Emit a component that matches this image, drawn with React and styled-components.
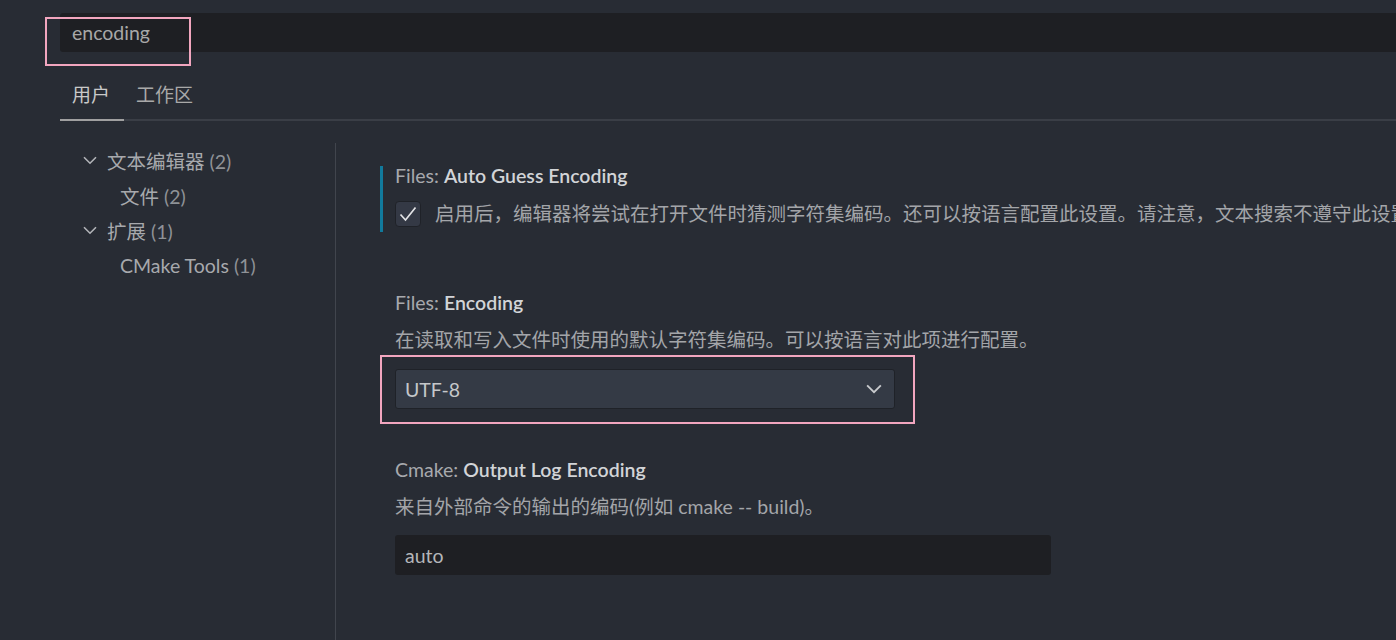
import React from "react";
import styled, { createGlobalStyle } from "styled-components";

const GlobalStyle = createGlobalStyle`
  html, body {
    margin: 0;
    padding: 0;
    background: #282c34;
    overflow: hidden;
  }
  body {
    font-family: "Lato", "Noto Sans CJK SC", sans-serif;
    color: #a9acb2;
  }
`;

const Page = styled.div`
  width: 1396px;
  height: 640px;
  padding: 13px 0 0 60px;
  box-sizing: border-box;
  display: flex;
  flex-direction: column;
  overflow: hidden;
`;

const SearchWrap = styled.div`
  position: relative;
`;

const SearchBox = styled.div`
  height: 39px;
  background: #1e1f23;
  border-radius: 3px 0 0 3px;
  display: flex;
  align-items: center;
  padding-left: 12px;
  font-size: 19.5px;
  color: #a8a8a8;
`;

// pink annotation frames drawn over the ui
const Highlight = styled.div`
  position: absolute;
  border: 2px solid #f2a6bf;
  pointer-events: none;
  box-sizing: border-box;
`;

const TabBar = styled.div`
  display: flex;
  height: 67px;
  align-items: flex-end;
  border-bottom: 2px solid #3a3e46;
`;

const Tab = styled.div`
  font-size: 19px;
  color: ${(p) => (p.$active ? "#c9c9c9" : "#a9a9a9")};
  padding: 0 ${(p) => (p.$active ? "14px" : "9px")} 12px 12px;
  margin-bottom: -2px;
  border-bottom: 2px solid ${(p) => (p.$active ? "#a0a0a0" : "transparent")};
  line-height: 24px;
`;

const Body = styled.div`
  flex: 1;
  display: flex;
`;

const Sidebar = styled.div`
  width: 275px;
  margin-top: 22px;
  border-right: 1px solid #41454d;
  display: flex;
  flex-direction: column;
`;

const TreeRow = styled.div`
  height: 35px;
  display: flex;
  align-items: center;
  padding-left: ${(p) => (p.$child ? "60px" : "23px")};
  font-size: 19.5px;
  color: #a7a9ad;
  gap: 10px;
  white-space: nowrap;
`;

const Count = styled.span`
  color: #8f9297;
  margin-left: 5px;
`;

const Content = styled.div`
  flex: 1;
  padding: 45px 0 0 44px;
  display: flex;
  flex-direction: column;
  min-width: 0;
  overflow: hidden;
`;

const Setting = styled.div`
  position: relative;
  margin-top: ${(p) => p.$top || 0}px;
  padding: 0 0 ${(p) => (p.$focused ? "5px" : "0")} 12px;
  border-left: 3px solid ${(p) => (p.$focused ? "#117a9c" : "transparent")};
  display: flex;
  flex-direction: column;
`;

const Title = styled.div`
  font-size: 19.5px;
  line-height: 20px;
  color: #a7a9ad;
  white-space: nowrap;
  b {
    font-weight: 600;
    color: #d2d4d7;
  }
`;

const Desc = styled.div`
  font-size: 19.5px;
  line-height: 20px;
  margin-top: 17px;
  color: #a3a5a9;
  white-space: nowrap;
`;

const CheckRow = styled.div`
  display: flex;
  align-items: center;
  height: 26px;
  line-height: 20px;
  margin-top: 15px;
  gap: 14px;
  white-space: nowrap;
  font-size: 19.5px;
  color: #a3a5a9;
`;

const CheckBox = styled.div`
  width: 26px;
  height: 26px;
  box-sizing: border-box;
  flex: 0 0 26px;
  background: #343945;
  border: 1px solid #1f2228;
  border-radius: 4px;
  display: flex;
  align-items: center;
  justify-content: center;
`;

const Select = styled.div`
  margin-top: 19px;
  width: 500px;
  height: 40px;
  box-sizing: border-box;
  background: #343a45;
  border: 1px solid #1f2228;
  border-radius: 3px;
  display: flex;
  align-items: center;
  justify-content: space-between;
  padding: 0 12px 0 9px;
  font-size: 19.5px;
  color: #c5c7ca;
`;

const TextInput = styled.div`
  margin-top: 18px;
  width: 656px;
  height: 40px;
  box-sizing: border-box;
  background: #1e1f23;
  border-radius: 3px;
  display: flex;
  align-items: center;
  padding-left: 10px;
  font-size: 19.5px;
  color: #b4b6b9;
`;

const Chevron = ({ size = 14, color = "#b3b5b9" }) => (
  <svg width={size} height={size * 0.6} viewBox="0 0 14 8" fill="none">
    <path d="M1 1l6 6 6-6" stroke={color} strokeWidth="1.6" />
  </svg>
);

export default function App() {
  return (
    <>
      <GlobalStyle />
      <Page>
        <SearchWrap>
          <SearchBox>encoding</SearchBox>
          <Highlight style={{ left: -15, top: 4, width: 146, height: 49 }} />
        </SearchWrap>
        <TabBar>
          <Tab $active>用户</Tab>
          <Tab>工作区</Tab>
        </TabBar>
        <Body>
          <Sidebar>
            <TreeRow>
              <Chevron />
              <span>
                文本编辑器<Count>(2)</Count>
              </span>
            </TreeRow>
            <TreeRow $child>
              <span>
                文件<Count>(2)</Count>
              </span>
            </TreeRow>
            <TreeRow>
              <Chevron />
              <span>
                扩展<Count>(1)</Count>
              </span>
            </TreeRow>
            <TreeRow $child>
              <span>
                CMake Tools<Count>(1)</Count>
              </span>
            </TreeRow>
          </Sidebar>
          <Content>
            <Setting $focused>
              <Title>
                Files: <b>Auto Guess Encoding</b>
              </Title>
              <CheckRow>
                <CheckBox>
                  <svg width="18" height="16" viewBox="0 0 18 16" fill="none">
                    <path
                      d="M1.5 8.5l5 5.5L16.5 1.5"
                      stroke="#e2e3e5"
                      strokeWidth="1.7"
                    />
                  </svg>
                </CheckBox>
                启用后，编辑器将尝试在打开文件时猜测字符集编码。还可以按语言配置此设置。请注意，文本搜索不遵守此设置。
              </CheckRow>
            </Setting>

            <Setting $top={61}>
              <Title>
                Files: <b>Encoding</b>
              </Title>
              <Desc>在读取和写入文件时使用的默认字符集编码。可以按语言对此项进行配置。</Desc>
              <Select>
                UTF-8
                <Chevron size={16} color="#c8cacd" />
              </Select>
              <Highlight style={{ left: -3, top: 62, width: 535, height: 69 }} />
            </Setting>

            <Setting $top={51}>
              <Title>
                Cmake: <b>Output Log Encoding</b>
              </Title>
              <Desc>来自外部命令的输出的编码(例如 cmake -- build)。</Desc>
              <TextInput>auto</TextInput>
            </Setting>
          </Content>
        </Body>
      </Page>
    </>
  );
}
